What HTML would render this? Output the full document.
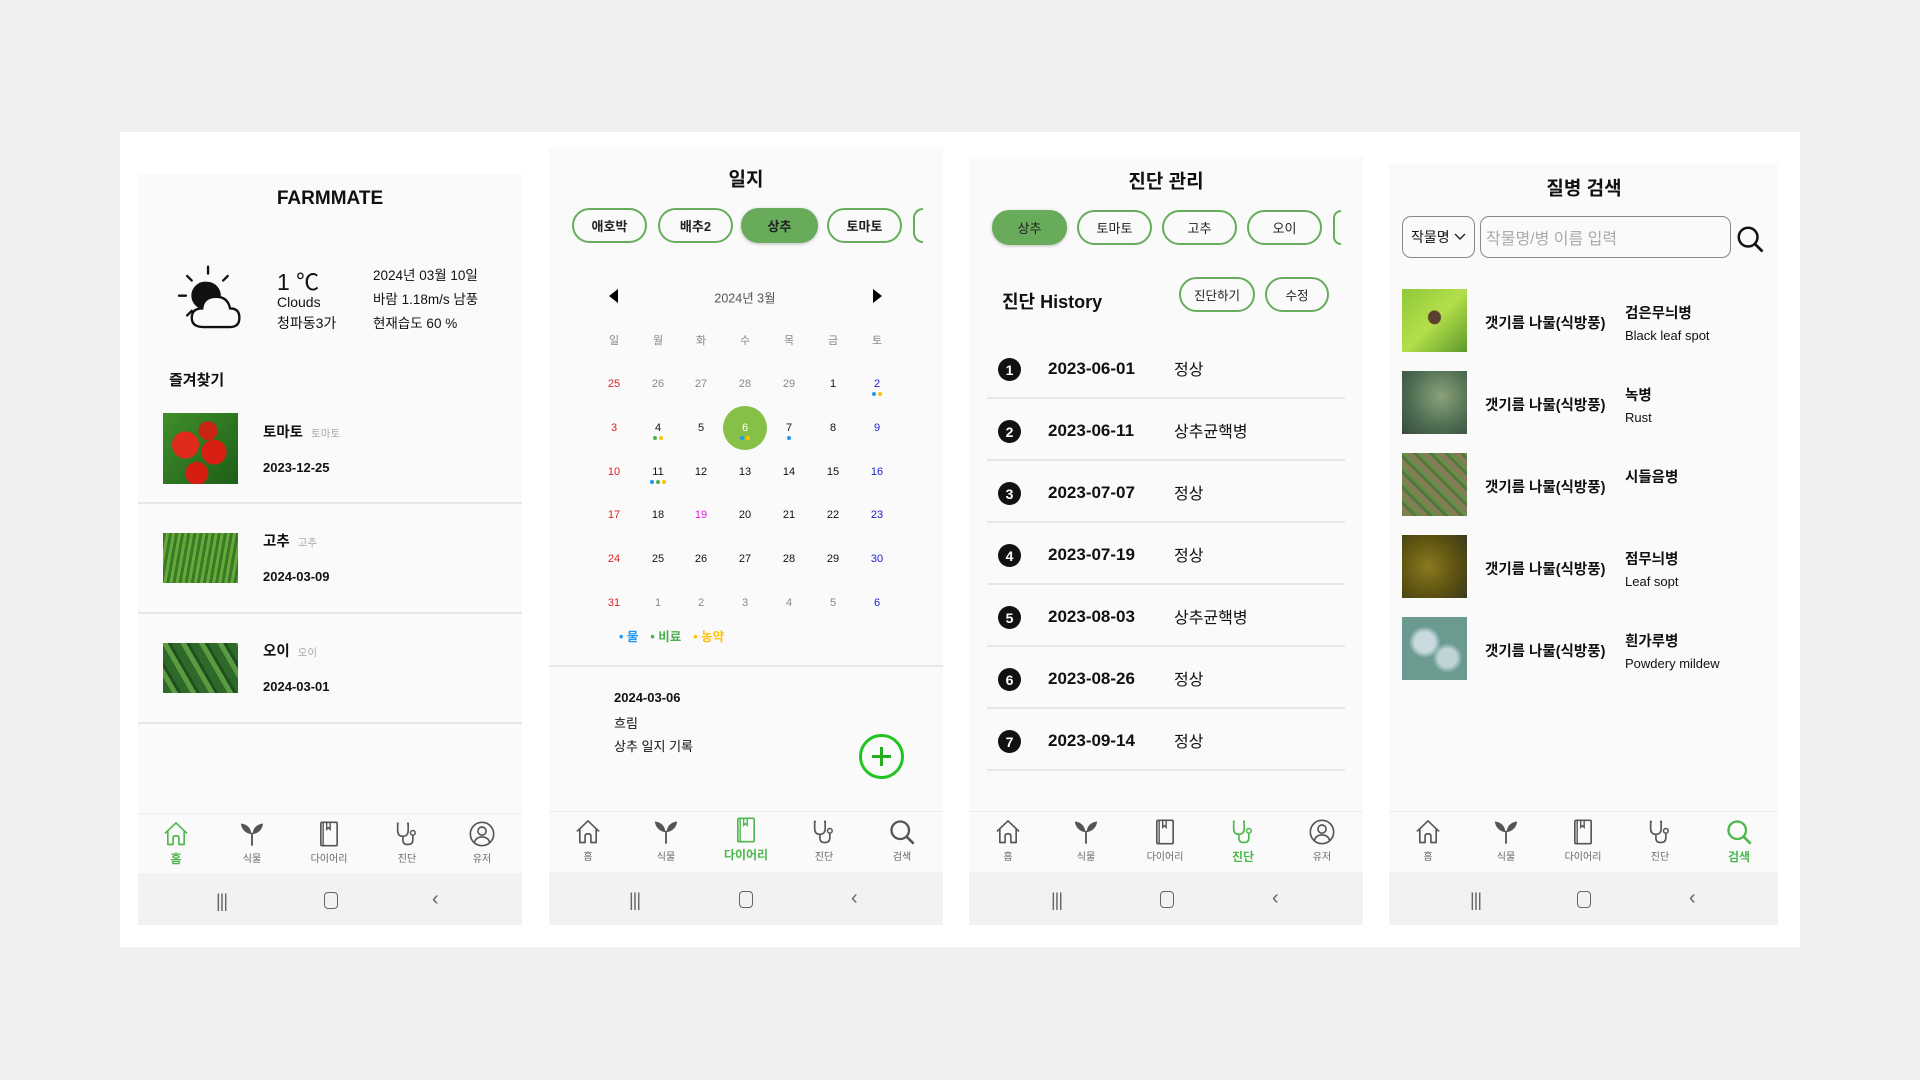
<!DOCTYPE html>
<html><head><meta charset="utf-8">
<style>
*{margin:0;padding:0;box-sizing:border-box}
body{width:1920px;height:1080px;background:#f0f0f0;position:relative;overflow:hidden;font-family:"Liberation Sans","Noto Sans CJK KR",sans-serif;color:#111}
.a{position:absolute;white-space:nowrap}
.card{position:absolute;left:120px;top:132px;width:1680px;height:815px;background:#fff}
.p{position:absolute;background:#fafafa}
.t{font-weight:bold;font-size:19px;transform:translate(-50%,-50%)}
.chip{position:absolute;height:35px;border:2.5px solid #66ad5b;border-radius:18px;font-size:13px;font-weight:bold;display:flex;align-items:center;justify-content:center;color:#222;background:#fafafa}
.chip.on{background:#67ab5b;border-color:#67ab5b;box-shadow:0 1px 3px rgba(0,0,0,.25)}
.nav{position:absolute;font-size:10px;color:#666;text-align:center;transform:translateX(-50%);width:60px}
.nav svg{width:28px;height:28px;display:block;margin:0 auto 2px}
.nav.on{color:#4cb84c;font-size:12px;font-weight:bold}
.sys{position:absolute;height:52px;background:#f2f2f2}
.c{transform:translate(-50%,-50%);font-size:11px}
.hr{position:absolute;height:2px;background:#e6e6e6}
.num{position:absolute;width:23px;height:23px;border-radius:50%;background:#111;color:#fff;font-size:14px;font-weight:bold;display:flex;align-items:center;justify-content:center}
.dot{position:absolute;width:4px;height:4px;border-radius:50%}
.r{font-size:16px;line-height:20px;margin-top:3px}
.d{font-size:17px;font-weight:bold;line-height:20px}
</style></head><body>
<svg width="0" height="0" style="position:absolute">
<defs>
<symbol id="home" viewBox="0 0 24 24"><path d="M2.5 11.5 L12 2.5 L21.5 11.5 M5 9.5 V21 H9.5 V15.5 Q9.5 13.5 12 13.5 Q14.5 13.5 14.5 15.5 V21 H19 V9.5" fill="none" stroke="currentColor" stroke-width="1.4" stroke-linejoin="round"/></symbol>
<symbol id="plant" viewBox="0 0 24 24"><path d="M12 22 V11" stroke="currentColor" stroke-width="1.6" fill="none"/><path d="M11.5 12 C8 12 3 9 2.5 3 C7 3.5 11 6 11.5 12Z M12.5 12 C16 12 21 9 21.5 3 C17 3.5 13 6 12.5 12Z" fill="currentColor"/></symbol>
<symbol id="book" viewBox="0 0 24 24"><rect x="5" y="2" width="14" height="20" rx="1" fill="none" stroke="currentColor" stroke-width="1.4"/><path d="M7 2 V22 M10 2 V8 L11.5 6.5 L13 8 V2" fill="none" stroke="currentColor" stroke-width="1.2"/></symbol>
<symbol id="steth" viewBox="0 0 24 24"><path d="M5 3 H4 V9 Q4 14 8.5 14 Q13 14 13 9 V3 H12 M8.5 14 V17 Q8.5 21 12.5 21 Q17 21 17 17 V13" fill="none" stroke="currentColor" stroke-width="1.4"/><circle cx="17" cy="11" r="2" fill="none" stroke="currentColor" stroke-width="1.3"/></symbol>
<symbol id="user" viewBox="0 0 24 24"><circle cx="12" cy="12" r="10" fill="none" stroke="currentColor" stroke-width="1.4"/><circle cx="12" cy="9.5" r="3.5" fill="none" stroke="currentColor" stroke-width="1.4"/><path d="M5.5 19 Q7 14.5 12 14.5 Q17 14.5 18.5 19" fill="none" stroke="currentColor" stroke-width="1.4"/></symbol>
<symbol id="srch" viewBox="0 0 24 24"><circle cx="10.5" cy="10.5" r="7.5" fill="none" stroke="currentColor" stroke-width="2"/><path d="M16 16 L22 22" stroke="currentColor" stroke-width="2.2"/></symbol>
</defs></svg>

<div class="card"></div>

<!-- PANEL 1 -->
<div class="p" style="left:138px;top:174px;width:384px;height:751px"></div>
<div class="a t" style="left:330px;top:199px">FARMMATE</div>
<svg class="a" style="left:174px;top:262px" width="82" height="72" viewBox="0 0 70 62">
<g stroke="#111" stroke-width="2" stroke-linecap="round"><path d="M29 4 V10 M11 12 L15 16 M46 12 L42 16 M4 29 H10 M11 46 L15 42"/></g>
<path d="M28 17 A12 12 0 0 0 22 40 L40 30 A12 12 0 0 0 28 17Z" fill="#111"/>
<path d="M25 56 Q15 56 15 48 Q15 40 24 40 Q25 30 36 30 Q46 30 48 40 Q56 40 56 48 Q56 56 48 56Z" fill="#fafafa" stroke="#111" stroke-width="2"/>
</svg>
<div class="a" style="left:277px;top:263px;font-size:23px">1 ℃</div>
<div class="a" style="left:277px;top:294px;font-size:14px">Clouds</div>
<div class="a" style="left:277px;top:313px;font-size:14px">청파동3가</div>
<div class="a" style="left:373px;top:264px;font-size:13.5px">2024년 03월 10일</div>
<div class="a" style="left:373px;top:288px;font-size:13.5px">바람 1.18m/s 남풍</div>
<div class="a" style="left:373px;top:312px;font-size:13.5px">현재습도 60 %</div>
<div class="a" style="left:169px;top:369px;font-size:15px;font-weight:bold">즐겨찾기</div>

<div class="a" style="left:163px;top:413px;width:75px;height:71px;background:radial-gradient(circle at 30% 45%,#e02a1a 0 13px,transparent 14px),radial-gradient(circle at 68% 55%,#d81f12 0 12px,transparent 13px),radial-gradient(circle at 45% 85%,#d41e10 0 11px,transparent 12px),radial-gradient(circle at 60% 25%,#c92314 0 9px,transparent 10px),linear-gradient(135deg,#3f8f2a,#1e5e18)"></div>
<div class="a" style="left:263px;top:421px;font-size:14.5px;font-weight:bold">토마토 <span style="font-size:10.5px;color:#aaa;font-weight:normal;margin-left:4px">토마토</span></div>
<div class="a" style="left:263px;top:460px;font-size:13px;font-weight:bold">2023-12-25</div>
<div class="hr" style="left:138px;top:502px;width:384px"></div>

<div class="a" style="left:163px;top:533px;width:75px;height:50px;background:repeating-linear-gradient(100deg,#3a7a24 0 3px,#66a83a 3px 6px),#3a6a20"></div>
<div class="a" style="left:263px;top:530px;font-size:14.5px;font-weight:bold">고추 <span style="font-size:10.5px;color:#aaa;font-weight:normal;margin-left:4px">고추</span></div>
<div class="a" style="left:263px;top:569px;font-size:13px;font-weight:bold">2024-03-09</div>
<div class="hr" style="left:138px;top:612px;width:384px"></div>

<div class="a" style="left:163px;top:643px;width:75px;height:50px;background:repeating-linear-gradient(60deg,#2d6a2a 0 8px,#5a9a40 8px 13px,#1f4f1f 13px 16px)"></div>
<div class="a" style="left:263px;top:640px;font-size:14.5px;font-weight:bold">오이 <span style="font-size:10.5px;color:#aaa;font-weight:normal;margin-left:4px">오이</span></div>
<div class="a" style="left:263px;top:679px;font-size:13px;font-weight:bold">2024-03-01</div>
<div class="hr" style="left:138px;top:722px;width:384px"></div>

<div class="hr" style="left:138px;top:813px;width:384px;height:1px;background:#eee"></div>
<div class="nav on" style="left:176px;top:820px"><svg><use href="#home"/></svg>홈</div>
<div class="nav" style="left:252px;top:820px"><svg style="color:#555"><use href="#plant"/></svg>식물</div>
<div class="nav" style="left:329px;top:820px"><svg style="color:#555"><use href="#book"/></svg>다이어리</div>
<div class="nav" style="left:407px;top:820px"><svg style="color:#555"><use href="#steth"/></svg>진단</div>
<div class="nav" style="left:482px;top:820px"><svg style="color:#555"><use href="#user"/></svg>유저</div>
<div class="sys" style="left:138px;top:873px;width:384px"></div>

<!-- PANEL 2 -->
<div class="p" style="left:549px;top:147px;width:394px;height:778px"></div>
<div class="a t" style="left:746px;top:178px">일지</div>
<div class="chip" style="left:572px;top:208px;width:75px">애호박</div>
<div class="chip" style="left:658px;top:208px;width:75px">배추2</div>
<div class="chip on" style="left:741px;top:208px;width:77px">상추</div>
<div class="chip" style="left:827px;top:208px;width:75px">토마토</div>
<div class="a" style="left:913px;top:208px;width:10px;height:35px;border:2.5px solid #66ad5b;border-right:none;border-radius:18px 0 0 18px"></div>
<div class="a" style="left:609px;top:289px;width:0;height:0;border-top:7px solid transparent;border-bottom:7px solid transparent;border-right:9px solid #000"></div>
<div class="a" style="left:873px;top:289px;width:0;height:0;border-top:7px solid transparent;border-bottom:7px solid transparent;border-left:9px solid #000"></div>
<div class="a c" style="left:745px;top:297px;font-size:12.5px;color:#555">2024년 3월</div>
<div class="a" style="left:723px;top:406px;width:44px;height:44px;border-radius:50%;background:#86c047"></div>
<div class="a c" style="left:614px;top:340px;color:#888">일</div><div class="a c" style="left:658px;top:340px;color:#888">월</div><div class="a c" style="left:701px;top:340px;color:#888">화</div><div class="a c" style="left:745px;top:340px;color:#888">수</div><div class="a c" style="left:789px;top:340px;color:#888">목</div><div class="a c" style="left:833px;top:340px;color:#888">금</div><div class="a c" style="left:877px;top:340px;color:#888">토</div>
<div class="a c" style="left:614px;top:384px;color:#e02020">25</div><div class="a c" style="left:658px;top:384px;color:#888">26</div><div class="a c" style="left:701px;top:384px;color:#888">27</div><div class="a c" style="left:745px;top:384px;color:#888">28</div><div class="a c" style="left:789px;top:384px;color:#888">29</div><div class="a c" style="left:833px;top:384px">1</div><div class="a c" style="left:877px;top:384px;color:#2020d0">2</div>
<div class="a c" style="left:614px;top:428px;color:#e02020">3</div><div class="a c" style="left:658px;top:428px">4</div><div class="a c" style="left:701px;top:428px">5</div><div class="a c" style="left:745px;top:428px;color:#fff">6</div><div class="a c" style="left:789px;top:428px">7</div><div class="a c" style="left:833px;top:428px">8</div><div class="a c" style="left:877px;top:428px;color:#2020d0">9</div>
<div class="a c" style="left:614px;top:472px;color:#e02020">10</div><div class="a c" style="left:658px;top:472px">11</div><div class="a c" style="left:701px;top:472px">12</div><div class="a c" style="left:745px;top:472px">13</div><div class="a c" style="left:789px;top:472px">14</div><div class="a c" style="left:833px;top:472px">15</div><div class="a c" style="left:877px;top:472px;color:#2020d0">16</div>
<div class="a c" style="left:614px;top:515px;color:#e02020">17</div><div class="a c" style="left:658px;top:515px">18</div><div class="a c" style="left:701px;top:515px;color:#e020e0">19</div><div class="a c" style="left:745px;top:515px">20</div><div class="a c" style="left:789px;top:515px">21</div><div class="a c" style="left:833px;top:515px">22</div><div class="a c" style="left:877px;top:515px;color:#2020d0">23</div>
<div class="a c" style="left:614px;top:559px;color:#e02020">24</div><div class="a c" style="left:658px;top:559px">25</div><div class="a c" style="left:701px;top:559px">26</div><div class="a c" style="left:745px;top:559px">27</div><div class="a c" style="left:789px;top:559px">28</div><div class="a c" style="left:833px;top:559px">29</div><div class="a c" style="left:877px;top:559px;color:#2020d0">30</div>
<div class="a c" style="left:614px;top:603px;color:#e02020">31</div><div class="a c" style="left:658px;top:603px;color:#888">1</div><div class="a c" style="left:701px;top:603px;color:#888">2</div><div class="a c" style="left:745px;top:603px;color:#888">3</div><div class="a c" style="left:789px;top:603px;color:#888">4</div><div class="a c" style="left:833px;top:603px;color:#888">5</div><div class="a c" style="left:877px;top:603px;color:#2020d0">6</div>
<div class="dot" style="left:872px;top:392px;background:#2196f3"></div><div class="dot" style="left:878px;top:392px;background:#ffc107"></div>
<div class="dot" style="left:653px;top:436px;background:#4caf50"></div><div class="dot" style="left:659px;top:436px;background:#ffc107"></div>
<div class="dot" style="left:740px;top:436px;background:#2196f3"></div><div class="dot" style="left:746px;top:436px;background:#ffc107"></div>
<div class="dot" style="left:787px;top:436px;background:#2196f3"></div>
<div class="dot" style="left:650px;top:480px;background:#2196f3"></div><div class="dot" style="left:656px;top:480px;background:#4caf50"></div><div class="dot" style="left:662px;top:480px;background:#ffc107"></div>
<div class="a" style="left:619px;top:626px;font-size:12.5px;font-weight:bold"><span style="color:#2196f3">• 물</span><span style="color:#4caf50;margin-left:12px">• 비료</span><span style="color:#ffc107;margin-left:12px">• 농약</span></div>
<div class="hr" style="left:549px;top:665px;width:394px"></div>
<div class="a" style="left:614px;top:690px;font-size:13px;font-weight:bold">2024-03-06</div>
<div class="a" style="left:614px;top:713px;font-size:13px">흐림</div>
<div class="a" style="left:614px;top:736px;font-size:13px">상추 일지 기록</div>
<div class="a" style="left:859px;top:734px;width:45px;height:45px;border-radius:50%;border:3px solid #22c422"></div>
<div class="a" style="left:872px;top:755px;width:19px;height:3px;background:#22b022"></div>
<div class="a" style="left:880px;top:747px;width:3px;height:19px;background:#22b022"></div>
<div class="hr" style="left:549px;top:811px;width:394px;height:1px;background:#eee"></div>
<div class="nav" style="left:588px;top:818px"><svg style="color:#555"><use href="#home"/></svg>홈</div>
<div class="nav" style="left:666px;top:818px"><svg style="color:#555"><use href="#plant"/></svg>식물</div>
<div class="nav on" style="left:746px;top:816px"><svg><use href="#book"/></svg>다이어리</div>
<div class="nav" style="left:824px;top:818px"><svg style="color:#555"><use href="#steth"/></svg>진단</div>
<div class="nav" style="left:902px;top:818px"><svg style="color:#555"><use href="#srch"/></svg>검색</div>
<div class="sys" style="left:549px;top:872px;width:394px;height:53px"></div>

<!-- PANEL 3 -->
<div class="p" style="left:969px;top:157px;width:394px;height:768px"></div>
<div class="a t" style="left:1166px;top:180px">진단 관리</div>
<div class="chip on" style="left:992px;top:210px;width:75px;font-weight:normal">상추</div>
<div class="chip" style="left:1077px;top:210px;width:75px;font-weight:normal">토마토</div>
<div class="chip" style="left:1162px;top:210px;width:75px;font-weight:normal">고추</div>
<div class="chip" style="left:1247px;top:210px;width:75px;font-weight:normal">오이</div>
<div class="a" style="left:1333px;top:210px;width:8px;height:35px;border:2.5px solid #66ad5b;border-right:none;border-radius:18px 0 0 18px"></div>
<div class="a" style="left:1002px;top:288px;font-size:18px;font-weight:bold">진단 History</div>
<div class="chip" style="left:1179px;top:277px;width:76px;font-weight:normal;font-size:12.5px">진단하기</div>
<div class="chip" style="left:1265px;top:277px;width:64px;font-weight:normal;font-size:12.5px">수정</div>
<div class="num" style="left:998px;top:358px">1</div><div class="a d" style="left:1048px;top:359px">2023-06-01</div><div class="a r" style="left:1174px;top:358px">정상</div><div class="hr" style="left:987px;top:397px;width:358px"></div>
<div class="num" style="left:998px;top:420px">2</div><div class="a d" style="left:1048px;top:421px">2023-06-11</div><div class="a r" style="left:1174px;top:420px">상추균핵병</div><div class="hr" style="left:987px;top:459px;width:358px"></div>
<div class="num" style="left:998px;top:482px">3</div><div class="a d" style="left:1048px;top:483px">2023-07-07</div><div class="a r" style="left:1174px;top:482px">정상</div><div class="hr" style="left:987px;top:521px;width:358px"></div>
<div class="num" style="left:998px;top:544px">4</div><div class="a d" style="left:1048px;top:545px">2023-07-19</div><div class="a r" style="left:1174px;top:544px">정상</div><div class="hr" style="left:987px;top:583px;width:358px"></div>
<div class="num" style="left:998px;top:606px">5</div><div class="a d" style="left:1048px;top:607px">2023-08-03</div><div class="a r" style="left:1174px;top:606px">상추균핵병</div><div class="hr" style="left:987px;top:645px;width:358px"></div>
<div class="num" style="left:998px;top:668px">6</div><div class="a d" style="left:1048px;top:669px">2023-08-26</div><div class="a r" style="left:1174px;top:668px">정상</div><div class="hr" style="left:987px;top:707px;width:358px"></div>
<div class="num" style="left:998px;top:730px">7</div><div class="a d" style="left:1048px;top:731px">2023-09-14</div><div class="a r" style="left:1174px;top:730px">정상</div><div class="hr" style="left:987px;top:769px;width:358px"></div>
<div class="hr" style="left:969px;top:811px;width:394px;height:1px;background:#eee"></div>
<div class="nav" style="left:1008px;top:818px"><svg style="color:#555"><use href="#home"/></svg>홈</div>
<div class="nav" style="left:1086px;top:818px"><svg style="color:#555"><use href="#plant"/></svg>식물</div>
<div class="nav" style="left:1165px;top:818px"><svg style="color:#555"><use href="#book"/></svg>다이어리</div>
<div class="nav on" style="left:1243px;top:818px"><svg><use href="#steth"/></svg>진단</div>
<div class="nav" style="left:1322px;top:818px"><svg style="color:#555"><use href="#user"/></svg>유저</div>
<div class="sys" style="left:969px;top:872px;width:394px;height:53px"></div>

<!-- PANEL 4 -->
<div class="p" style="left:1389px;top:164px;width:389px;height:761px"></div>
<div class="a t" style="left:1584px;top:187px">질병 검색</div>
<div class="a" style="left:1402px;top:216px;width:73px;height:42px;border:1.5px solid #888;border-radius:9px;font-size:14px;display:flex;align-items:center;padding-left:8px">작물명 <svg width="12" height="8" style="margin-left:4px"><path d="M1 1 L6 6 L11 1" fill="none" stroke="#222" stroke-width="1.4"/></svg></div>
<div class="a" style="left:1480px;top:216px;width:251px;height:42px;border:1.5px solid #888;border-radius:9px;font-size:16px;color:#aaa;display:flex;align-items:center;padding-left:5px">작물명/병 이름 입력</div>
<svg class="a" style="left:1735px;top:224px;color:#111" width="30" height="30"><use href="#srch"/></svg>
<div class="a" style="left:1402px;top:289px;width:65px;height:63px;background:radial-gradient(ellipse at 50% 45%,#5a4030 0 6px,transparent 7px),linear-gradient(135deg,#8fc83a,#b4de4a 50%,#5c9a2c)"></div>
<div class="a" style="left:1485px;top:312px;font-size:14.5px;font-weight:bold">갯기름 나물(식방풍)</div>
<div class="a" style="left:1625px;top:302px;font-size:14.5px;font-weight:bold">검은무늬병</div>
<div class="a" style="left:1625px;top:328px;font-size:13px">Black leaf spot</div>
<div class="a" style="left:1402px;top:371px;width:65px;height:63px;background:radial-gradient(circle at 60% 40%,#8aa27a,#4c6a50 60%,#3a4a40)"></div>
<div class="a" style="left:1485px;top:394px;font-size:14.5px;font-weight:bold">갯기름 나물(식방풍)</div>
<div class="a" style="left:1625px;top:384px;font-size:14.5px;font-weight:bold">녹병</div>
<div class="a" style="left:1625px;top:410px;font-size:13px">Rust</div>
<div class="a" style="left:1402px;top:453px;width:65px;height:63px;background:repeating-linear-gradient(45deg,#6e8a4a 0 4px,#8a7a5a 4px 8px,#4e7a3a 8px 11px)"></div>
<div class="a" style="left:1485px;top:476px;font-size:14.5px;font-weight:bold">갯기름 나물(식방풍)</div>
<div class="a" style="left:1625px;top:466px;font-size:14.5px;font-weight:bold">시들음병</div>
<div class="a" style="left:1402px;top:535px;width:65px;height:63px;background:radial-gradient(circle at 40% 50%,#8a7a20,#5a5010 60%,#3a3a20)"></div>
<div class="a" style="left:1485px;top:558px;font-size:14.5px;font-weight:bold">갯기름 나물(식방풍)</div>
<div class="a" style="left:1625px;top:548px;font-size:14.5px;font-weight:bold">점무늬병</div>
<div class="a" style="left:1625px;top:574px;font-size:13px">Leaf sopt</div>
<div class="a" style="left:1402px;top:617px;width:65px;height:63px;background:radial-gradient(circle at 35% 40%,#c8dae0 0 10px,transparent 16px),radial-gradient(circle at 70% 65%,#c0d4d8 0 9px,transparent 15px),#6a9a90"></div>
<div class="a" style="left:1485px;top:640px;font-size:14.5px;font-weight:bold">갯기름 나물(식방풍)</div>
<div class="a" style="left:1625px;top:630px;font-size:14.5px;font-weight:bold">흰가루병</div>
<div class="a" style="left:1625px;top:656px;font-size:13px">Powdery mildew</div>
<div class="hr" style="left:1389px;top:811px;width:389px;height:1px;background:#eee"></div>
<div class="nav" style="left:1428px;top:818px"><svg style="color:#555"><use href="#home"/></svg>홈</div>
<div class="nav" style="left:1506px;top:818px"><svg style="color:#555"><use href="#plant"/></svg>식물</div>
<div class="nav" style="left:1583px;top:818px"><svg style="color:#555"><use href="#book"/></svg>다이어리</div>
<div class="nav" style="left:1660px;top:818px"><svg style="color:#555"><use href="#steth"/></svg>진단</div>
<div class="nav on" style="left:1739px;top:818px"><svg><use href="#srch"/></svg>검색</div>
<div class="sys" style="left:1389px;top:872px;width:389px;height:53px"></div>

<!-- system bar icons -->
<div class="a" style="left:216px;top:891px;font-size:18px;color:#666;letter-spacing:-1px">|||</div>
<div class="a" style="left:324px;top:892px;width:14px;height:17px;border:1.6px solid #666;border-radius:4px"></div>
<div class="a" style="left:432px;top:888px;font-size:20px;color:#666">‹</div>
<div class="a" style="left:629px;top:890px;font-size:18px;color:#666;letter-spacing:-1px">|||</div>
<div class="a" style="left:739px;top:891px;width:14px;height:17px;border:1.6px solid #666;border-radius:4px"></div>
<div class="a" style="left:851px;top:887px;font-size:20px;color:#666">‹</div>
<div class="a" style="left:1051px;top:890px;font-size:18px;color:#666;letter-spacing:-1px">|||</div>
<div class="a" style="left:1160px;top:891px;width:14px;height:17px;border:1.6px solid #666;border-radius:4px"></div>
<div class="a" style="left:1272px;top:887px;font-size:20px;color:#666">‹</div>
<div class="a" style="left:1470px;top:890px;font-size:18px;color:#666;letter-spacing:-1px">|||</div>
<div class="a" style="left:1577px;top:891px;width:14px;height:17px;border:1.6px solid #666;border-radius:4px"></div>
<div class="a" style="left:1689px;top:887px;font-size:20px;color:#666">‹</div>
</body></html>
